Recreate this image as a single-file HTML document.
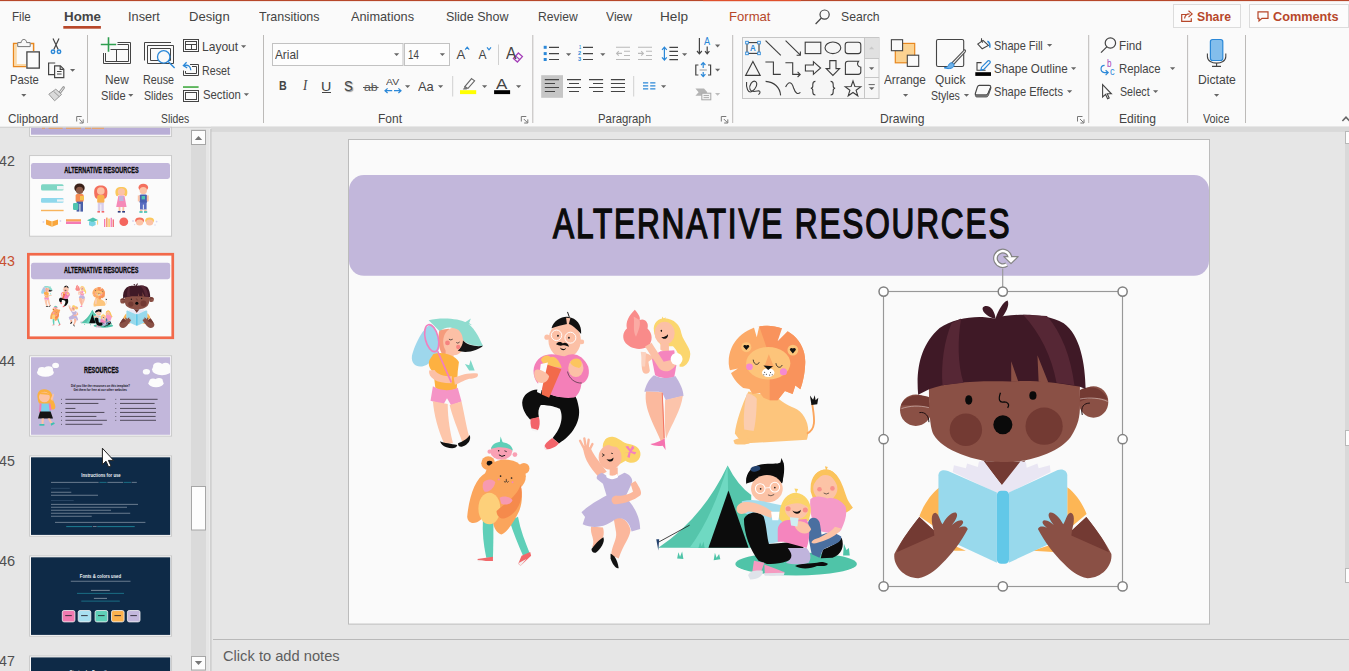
<!DOCTYPE html>
<html lang="en"><head><meta charset="utf-8"><title>PowerPoint</title>
<style>
html,body{margin:0;padding:0}
body{width:1349px;height:671px;overflow:hidden;position:relative;background:#e6e6e6;font-family:"Liberation Sans", sans-serif;}
svg#g{position:absolute;left:0;top:0}
svg text{font-family:"Liberation Sans", sans-serif}
.t{position:absolute;display:block;transform-origin:0 0;white-space:nowrap;line-height:1;font-family:"Liberation Sans", sans-serif}
</style></head><body>
<svg id="g" width="1349" height="671" viewBox="0 0 1349 671">
<!-- BASE: backgrounds and chrome -->
<rect x="0" y="0" width="1349" height="671" fill="#e6e6e6"/>
<rect x="0" y="0" width="1349" height="127" fill="#fafafa"/>
<rect x="0" y="126.7" width="1349" height="1.2" fill="#d2d2d2"/>
<rect x="211" y="126.7" width="1138" height="5.2" fill="#d9d9d9"/>
<!-- top accent line -->
<rect x="0" y="0" width="1349" height="1.1" fill="#b7472a"/>
<rect x="703" y="0" width="98" height="1.1" fill="#e0502c"/>
<!-- home underline -->
<rect x="63.3" y="26" width="37.6" height="2.7" fill="#b7472a"/>
<!-- share / comments buttons -->
<rect x="1173.5" y="4.5" width="67" height="23" fill="#fcfcfc" stroke="#dcdcdc" stroke-width="1"/>
<rect x="1249.5" y="4.5" width="99" height="23" fill="#fcfcfc" stroke="#dcdcdc" stroke-width="1"/>
<!-- group separators -->
<g fill="#bcbab8">
<rect x="87" y="35" width="1" height="88"/>
<rect x="263" y="35" width="1" height="88"/>
<rect x="532.3" y="35" width="1" height="88"/>
<rect x="732.2" y="35" width="1" height="88"/>
<rect x="1088.2" y="35" width="1" height="88"/>
<rect x="1187.1" y="35" width="1" height="88"/>
<rect x="1245" y="35" width="1" height="88"/>
</g>
<g fill="#d0d0d0">
<rect x="498" y="44.5" width="1" height="20.5"/>
<rect x="452.2" y="76" width="1" height="20.5"/>
<rect x="633.2" y="76" width="1" height="20.5"/>
</g>
<!-- font boxes -->
<rect x="272.5" y="43.5" width="130.5" height="22" fill="#fdfdfd" stroke="#c2c2c2"/>
<rect x="404.5" y="43.5" width="45" height="22" fill="#fdfdfd" stroke="#c2c2c2"/>
<!-- align-left selected bg -->
<rect x="541.2" y="75.2" width="21.8" height="22.6" fill="#c6c6c6"/>
<!-- shapes gallery -->
<rect x="742.5" y="37.5" width="136.5" height="61" fill="#f6f6f6" stroke="#c6c6c6"/>
<rect x="864.5" y="38" width="14" height="20.5" fill="#e1e1e1"/>
<path d="M864.5 37.5V98.5M864.5 58.5H879M864.5 77.5H879" stroke="#c6c6c6" fill="none"/>
<!-- notes pane separator -->
<rect x="213" y="639" width="1136" height="1" fill="#b9b9b9"/>
<!-- left panel scrollbar -->
<rect x="191" y="129" width="15" height="542" fill="#dadada"/>
<rect x="191.5" y="130.5" width="14" height="14" fill="#fdfdfd" stroke="#a6a6a6"/>
<path d="M194.8 140l3.7-4 3.7 4z" fill="#777"/>
<rect x="191.5" y="486.5" width="14" height="43.5" fill="#fdfdfd" stroke="#a6a6a6"/>
<rect x="191.5" y="656.5" width="14" height="13.5" fill="#fdfdfd" stroke="#a6a6a6"/>
<path d="M194.8 661l3.7 4 3.7-4z" fill="#777"/>
<rect x="209.4" y="129" width="1" height="542" fill="#f0f0f0"/><rect x="210.4" y="129" width="1" height="542" fill="#bebebe"/>
<!-- right scrollbar fragments -->
<rect x="1345" y="132" width="4" height="437" fill="#d9d9d9"/>
<rect x="1345.5" y="131.5" width="8" height="12" fill="#fdfdfd" stroke="#b8b8b8"/>
<rect x="1345.5" y="430.5" width="8" height="15" fill="#fdfdfd" stroke="#b8b8b8"/>
<rect x="1345.5" y="568.5" width="8" height="14" fill="#fdfdfd" stroke="#b8b8b8"/>

<!-- RIBBON ICONS -->
<g id="arrows">
<path d="M21.2 94h5.2l-2.6 2.8z" fill="#666666"/>
<path d="M70 68.9h5.2l-2.6 2.8z" fill="#666666"/>
<path d="M128.2 94h5.2l-2.6 2.8z" fill="#666666"/>
<path d="M241 45.2h5.2l-2.6 2.8z" fill="#666666"/>
<path d="M243.8 93.2h5.2l-2.6 2.8z" fill="#666666"/>
<path d="M394 53.2h5.2l-2.6 2.8z" fill="#666666"/>
<path d="M439.8 53.2h5.2l-2.6 2.8z" fill="#666666"/>
<path d="M405 85.3h5.2l-2.6 2.8z" fill="#666666"/>
<path d="M438 85.3h5.2l-2.6 2.8z" fill="#666666"/>
<path d="M482 85.3h5.2l-2.6 2.8z" fill="#666666"/>
<path d="M516 85.3h5.2l-2.6 2.8z" fill="#666666"/>
<path d="M566 53.2h5.2l-2.6 2.8z" fill="#666666"/>
<path d="M600.2 53.2h5.2l-2.6 2.8z" fill="#666666"/>
<path d="M682 53.2h5.2l-2.6 2.8z" fill="#666666"/>
<path d="M715 44.6h5.2l-2.6 2.8z" fill="#666666"/>
<path d="M715 68.8h5.2l-2.6 2.8z" fill="#666666"/>
<path d="M661 85.3h5.2l-2.6 2.8z" fill="#666666"/>
<path d="M903 94h5.2l-2.6 2.8z" fill="#666666"/>
<path d="M963.9 94h5.2l-2.6 2.8z" fill="#666666"/>
<path d="M1047 44h5.2l-2.6 2.8z" fill="#666666"/>
<path d="M1071 67.2h5.2l-2.6 2.8z" fill="#666666"/>
<path d="M1067 90.2h5.2l-2.6 2.8z" fill="#666666"/>
<path d="M1170 67.2h5.2l-2.6 2.8z" fill="#666666"/>
<path d="M1153 90.2h5.2l-2.6 2.8z" fill="#666666"/>
<path d="M1214 94h5.2l-2.6 2.8z" fill="#666666"/>
<path d="M715 93h5.2l-2.6 2.8z" fill="#bdbdbd"/>
</g>
<path d="M76.7 121.5V116.5H81.7" fill="none" stroke="#777" stroke-width="1"/><path d="M79.2 119l3.6 3.6M83.2 119.4V123H79.60000000000001" fill="none" stroke="#777" stroke-width="1"/>
<path d="M521.3 121.5V116.5H526.3" fill="none" stroke="#777" stroke-width="1"/><path d="M523.8 119l3.6 3.6M527.8 119.4V123H524.1999999999999" fill="none" stroke="#777" stroke-width="1"/>
<path d="M721.3 121.5V116.5H726.3" fill="none" stroke="#777" stroke-width="1"/><path d="M723.8 119l3.6 3.6M727.8 119.4V123H724.1999999999999" fill="none" stroke="#777" stroke-width="1"/>
<path d="M1077.5 121.5V116.5H1082.5" fill="none" stroke="#777" stroke-width="1"/><path d="M1080 119l3.6 3.6M1084 119.4V123H1080.4" fill="none" stroke="#777" stroke-width="1"/>
<g fill="none" stroke="#444444" stroke-width="1.2"><circle cx="824.6" cy="14.6" r="4.6"/><path d="M821.4 18l-5.8 6"/></g>
<g fill="none" stroke="#b7472a" stroke-width="1.2"><path d="M1186.5 14.5H1181.7V21.3H1191.3V18.2"/><path d="M1184.6 18.5c0.3-3 2.2-4.6 5-4.6M1188.5 10.8l3.6 3.1-3.6 3.2"/></g>
<path d="M1258 11.8H1268V18.4H1262l-3 2.6v-2.6H1258z" fill="none" stroke="#b7472a" stroke-width="1.2"/>
<path d="M1342.4 121l3.6-3.8 3.6 3.8" fill="none" stroke="#666" stroke-width="1.6"/>
<g><path d="M17.2 43.6H13.6V66.6H26" fill="none" stroke="#e8871e" stroke-width="1.5"/><path d="M14.4 44.4h2.4V65.8h-2.4z" fill="#fbd9a5"/><path d="M14.4 64h11.6v1.8H14.4z" fill="#fbd9a5"/><path d="M30.6 43.6H33.6V51" fill="none" stroke="#e8871e" stroke-width="1.5"/>
<path d="M17.7 46.6V42.6H21.2c0-4.2 5.4-4.2 5.4 0H30.2V46.6z" fill="#f9f9f9" stroke="#777" stroke-width="1"/>
<rect x="26.9" y="51.9" width="12.4" height="16.2" fill="#fcfcfc" stroke="#444444" stroke-width="1.3"/></g>
<g fill="none" stroke="#444444" stroke-width="1.2"><path d="M53 38.5L58.2 49.6M59 38.5L53.8 49.6"/></g><g fill="none" stroke="#2b88d8" stroke-width="1.5"><circle cx="53" cy="51.8" r="1.7"/><circle cx="59" cy="51.8" r="1.7"/></g>
<g fill="none" stroke="#444444" stroke-width="1.2"><path d="M54 74.6H48.6V63H55.2"/><path d="M54.6 65.8H60.4L63.8 69.2V77.6H54.6z" fill="#f9f9f9"/><path d="M60.2 66V69.4H63.6"/><path d="M57 71.5h4.6M57 74h4.6" stroke-width="1"/></g>
<path d="M63.6 87.6l-4 5.2" stroke="#9a9a9a" stroke-width="2.8" stroke-linecap="round"/><path d="M63.5 87.8l-3.6 4.6" stroke="#ececec" stroke-width="1" stroke-linecap="round"/><path d="M55.8 89.2L61.6 94.4L54.6 100.8L48.8 94.200000000000001z" fill="#dadada" stroke="#9a9a9a" stroke-width="1" stroke-linejoin="round"/><path d="M53.6 91.4L59.2 96.6" stroke="#9a9a9a" stroke-width="1"/>
<g fill="none" stroke="#444444" stroke-width="1"><path d="M117.5 42.5H130.5V63.5H103.5V53"/><path d="M117.5 44.5H128.5V61.5H105.5V53"/><path d="M110.5 49.5H128.5M116.5 49.5V61.5"/></g><path d="M100.8 44.5H116.2M108.5 37.2V51.8" stroke="#2e9e4f" stroke-width="1.6" fill="none"/>
<g fill="none" stroke="#444444" stroke-width="1"><path d="M171 42.5H144.5V60.5"/><path d="M147.5 45.5H173.5V63.5H147.5z"/><path d="M150.5 48.5H170.5V60.5H150.5z"/></g><circle cx="163.7" cy="56.9" r="6.2" fill="#f9f9f9" stroke="#2b88d8" stroke-width="1.3"/><path d="M168.2 61.6l6.4 6.4" stroke="#2b88d8" stroke-width="1.4"/>
<g fill="none" stroke="#444444" stroke-width="1"><rect x="183.5" y="39.5" width="15" height="12"/><rect x="185.5" y="41.5" width="11" height="8"/><path d="M185.5 44.5H196.5M191.5 44.5V49.5"/></g>
<g fill="none" stroke="#444444" stroke-width="1"><path d="M190 64.5H198.5V75.5H183.5V70.5"/><path d="M192 66.5H196.5V73.5H185.5V71"/></g><path d="M184.2 65.6c4-1.2 6.4 0.6 6.6 4.6M186.6 62.2l-3.2 3.4 3.8 2.4" fill="none" stroke="#2b88d8" stroke-width="1.3"/>
<rect x="183" y="86.2" width="15.6" height="1.7" fill="#4cae4c"/><g fill="none" stroke="#444444" stroke-width="1"><rect x="183.5" y="90.5" width="15" height="11"/><rect x="185.5" y="92.5" width="11" height="7"/></g>
<path d="M465.2 49.6l2-2.4 2 2.4" fill="none" stroke="#2b88d8" stroke-width="1.2"/><path d="M487 47.4l2 2.4 2-2.4" fill="none" stroke="#2b88d8" stroke-width="1.2"/>
<path d="M518.4 53l4 3.6-5 5.4-4-3.6z" fill="#f9f9f9" stroke="#a43fb8" stroke-width="1.3"/><path d="M515.6 55.9l4 3.6" stroke="#a43fb8" stroke-width="1.1"/>
<path d="M363 87.5H378.6" stroke="#555" stroke-width="1"/>
<path d="M385 90.7H392.2M387.6 88.4l-2.6 2.3 2.6 2.3M394 90.7H401M398.4 88.4l2.6 2.3-2.6 2.3" fill="none" stroke="#2b88d8" stroke-width="1.2"/>
<path d="M322 92.5H331" stroke="#444444" stroke-width="1"/>
<rect x="460" y="90.2" width="16.2" height="3.9" fill="#ffff00"/><path d="M471.6 78.6l3 2.2-6.6 7.6-3.2-1.8z" fill="none" stroke="#666" stroke-width="1.1"/><path d="M464.8 86.6l3.2 1.8-1.6 1.2h-3.6z" fill="#777"/>
<rect x="494.1" y="90.2" width="16" height="3.9" fill="#000"/>
<g fill="#2b88d8"><rect x="543.7" y="45.8" width="3" height="3"/><rect x="543.7" y="52.1" width="3" height="3"/><rect x="543.7" y="58" width="3" height="3"/></g><path d="M549 47.3H559M549 53.6H559M549 59.5H559" stroke="#444444" stroke-width="1.2"/>
<path d="M583 47.3H593M583 53.6H593M583 59.5H593" stroke="#444444" stroke-width="1.2"/>
<g stroke="#b9b9b9" stroke-width="1.1" fill="none"><path d="M616 47.3H630M624 51.3H630M624 55.5H630M616 59.5H630M616.6 53.4H622M618.8 51.2l-2.2 2.2 2.2 2.2"/><path d="M638 47.3H652M646 51.3H652M646 55.5H652M638 59.5H652M638 53.4H643.4M641.2 51.2l2.2 2.2-2.2 2.2"/></g>
<path d="M669.4 47.3H678M669.4 51.4H678M669.4 55.5H678M669.4 59.6H678" stroke="#444444" stroke-width="1.2"/><path d="M664.4 47.4V59.8M662 49.8l2.4-2.6 2.4 2.6M662 57.4l2.4 2.6 2.4-2.6" fill="none" stroke="#2b88d8" stroke-width="1.2"/>
<path d="M699.4 38V53.6M697 51l2.4 2.8 2.4-2.8M707.2 46.4V53.6M705 51.2l2.2 2.6 2.2-2.6" fill="none" stroke="#444444" stroke-width="1.2"/>
<path d="M698.4 65H695.8V75H698.4M708 65H710.6V75H708" fill="none" stroke="#444444" stroke-width="1.2"/><path d="M699.6 70H706.8" stroke="#999" stroke-width="1"/><path d="M703.2 62.8V68M701 65l2.2-2.4 2.2 2.4M703.2 72V76.6M701 74.2l2.2 2.4 2.2-2.4" fill="none" stroke="#2b88d8" stroke-width="1.2"/>
<path d="M695.4 88.6H704l3.4 3.6-3.4 3.6H695.4l3.2-3.6z" fill="#b4b4b4"/><rect x="701.8" y="93.2" width="9" height="6.6" fill="#f3f3f3" stroke="#a8a8a8"/><path d="M703.6 95.5H709M703.6 97.6H709" stroke="#a8a8a8" stroke-width=".9"/>
<path d="M544.8 79.6H559M544.8 83.5H555M544.8 87.5H559M544.8 91.5H555" stroke="#444444" stroke-width="1.2"/>
<path d="M567 79.6H581M569 83.5H579M567 87.5H581M569 91.5H579" stroke="#444444" stroke-width="1.2"/>
<path d="M589 79.6H603.1M593 83.5H603.1M589 87.5H603.1M593 91.5H603.1" stroke="#444444" stroke-width="1.2"/>
<path d="M610.9 79.6H625M610.9 83.5H625M610.9 87.5H625M610.9 91.5H625" stroke="#444444" stroke-width="1.2"/>
<path d="M643 82.8h5.2M650.2 82.8h5.2M643 85.8h5.2M650.2 85.8h5.2M643 88.8h5.2M650.2 88.8h5.2" stroke="#2b88d8" stroke-width="1.2"/>
<g fill="none" stroke="#3d3d3d" stroke-width="1.1">
<rect x="747" y="42.6" width="12" height="10.8"/>
<path d="M765.6 40.6L780.8 55.4"/>
<path d="M785.6 40.6L800.4 55.2M796.6 55.2H800.4V51.4"/>
<rect x="805.2" y="42.2" width="15.6" height="11.4"/>
<ellipse cx="832.9" cy="47.8" rx="7.9" ry="5.8"/>
<rect x="845.2" y="42.2" width="15.6" height="11.4" rx="2.6"/>
<path d="M752.9 61.4L745.6 75.4H760.2z"/>
<path d="M765.4 62H773.4V74.4H780.8"/>
<path d="M785.4 62.8H792.7V74.4H800.2M797.6 71.8l2.6 2.6-2.6 2.6"/>
<path d="M805.4 65H813.4V61.6L820.6 68L813.4 74.4V71H805.4z"/>
<path d="M829.8 60.6H836V68.6H839.6L832.9 75.4L826.2 68.6H829.8z"/>
<path d="M848 61.2H858.6C856.6 63.8 857.4 66.4 860.8 67.2V71.8C860.8 73.4 859.6 74.4 858.2 74.4H845.4V63.8C845.4 62.2 846.4 61.2 848 61.2z"/>
<path d="M746.6 82c-0.8 6 1.6 11.4 5.2 9.600000000000001c4-2.2 6.600000000000001-8.2 3.6-10.2c-3-1.6-6.8 4.2-5.4 8c1.4 3.6 6.2 1.8 8.8 1.4c1.6 0.4 1.8 2 -0.4 3.8"/>
<path d="M765.6 81.4C774 82 780 87 780.6 95.4"/>
<path d="M785.6 87C788.6 81 791.6 81.4 793.6 88C795.6 94 798 94.4 800.4 92.4"/>
<path d="M815.4 81.4c-2.400000000000001 0-2.6 1-2.6 3v1.6c0 1.4-0.6 2.2-2 2.2c1.4 0 2 0.8 2 2.2v1.6c0 2 0.2 3 2.6 3"/>
<path d="M830.6 81.4c2.4 0 2.6 1 2.6 3v1.6c0 1.4 0.6 2.2 2 2.2c-1.4 0-2 0.8-2 2.2v1.6c0 2-0.2 3-2.6 3"/>
<path d="M853.0 81.0L854.9 86.5L860.8 86.7L856.1 90.2L857.8 95.8L853.0 92.5L848.2 95.8L849.9 90.2L845.2 86.7L851.1 86.5z"/>
</g>
<rect x="745.7" y="41.300000000000004" width="2.6" height="2.6" fill="#fff" stroke="#2b88d8" stroke-width="0.9"/>
<rect x="757.7" y="41.300000000000004" width="2.6" height="2.6" fill="#fff" stroke="#2b88d8" stroke-width="0.9"/>
<rect x="745.7" y="52.1" width="2.6" height="2.6" fill="#fff" stroke="#2b88d8" stroke-width="0.9"/>
<rect x="757.7" y="52.1" width="2.6" height="2.6" fill="#fff" stroke="#2b88d8" stroke-width="0.9"/>
<path d="M869 49.2l2.6-2.8 2.6 2.8z" fill="#c8c8c8"/><path d="M869 67.2h5.2l-2.6 2.8z" fill="#666"/><path d="M868.6 84.6H874.8" stroke="#666" stroke-width="1"/><path d="M869 87.2h5.4l-2.7 2.9z" fill="#666"/>
<rect x="895.3" y="43.4" width="19.4" height="19.4" fill="#fcd391" stroke="#e8871e" stroke-width="1.2"/><rect x="891.4" y="39.7" width="11.2" height="11" fill="#fafafa" stroke="#444444" stroke-width="1.1"/><rect x="907.3" y="55.2" width="11.4" height="11.2" fill="#fafafa" stroke="#444444" stroke-width="1.1"/>
<rect x="936.5" y="39.5" width="27.2" height="27" rx="1.6" fill="none" stroke="#444444" stroke-width="1.1"/><path d="M964.6 49.6c1 .6 1.2 1.4.6 2.2L953.6 64.4l-1.8-1.4z" fill="#f9f9f9" stroke="#555" stroke-width="1.1"/><path d="M944.2 67.8c3.4-.2 4.2-2.2 5-3.800000000000001c1.4-2 4.6-1.2 4.8 1.2c.2 2.6-4.400000000000001 4.600000000000001-9.8 2.6z" fill="#6fb0e6" stroke="#2b88d8" stroke-width="1"/>
<path d="M981.6 38.2c-.6 1.4-.2 3 1.2 4.400000000000001" fill="none" stroke="#444444" stroke-width="1.1"/><path d="M983 40.4L988.4 45.4L982.2 48.8L977.8 44z" fill="none" stroke="#444444" stroke-width="1.1"/><path d="M987.4 41.2c2.2 1 2.8 3.4 2.4 6.4" fill="none" stroke="#2b88d8" stroke-width="1.6"/>
<path d="M985.6 70.2H977V62.6H981.6" fill="none" stroke="#444444" stroke-width="1.1"/><rect x="975.3" y="72.2" width="15.7" height="3.7" fill="#000"/><path d="M988 60.8c1.2-.6 2.6.6 2.2 1.8L983.8 69.4l-3 .8.8-3z" fill="#f9f9f9" stroke="#2b88d8" stroke-width="1.2"/>
<path d="M979.4 85.4H989c1.4 0 2 .8 1.600000000000001 2L988 93.4c-.4 1-1.2 1.600000000000001-2.4 1.600000000000001H976.6c-1.2 0-1.6-.8-1.2-1.8L977.4 87c.4-1 1-1.6 2-1.6z" fill="#f9f9f9" stroke="#444444" stroke-width="1.1"/><path d="M975.4 93.6V95.4c0 1 .6 1.6 1.6 1.6H986c1.2 0 2-.6 2.400000000000001-1.600000000000001L990.8 88.6V87L988 93.6c-.4 1-1.2 1.400000000000001-2.4 1.400000000000001H976.800000000000001c-1 0-1.400000000000001-.6-1.400000000000001-1.400000000000001z" fill="#8a8a8a" stroke="#444444" stroke-width=".8"/>
<g fill="none" stroke="#444444" stroke-width="1.2"><circle cx="1110.4" cy="43" r="5.2"/><path d="M1106.8 46.8l-5.8 5.8"/></g>
<path d="M1104.6 65.4c-4.6 0-4.8 6.6-.2 7.2h3.4M1105.6 70.2l2.6 2.4-2.6 2.6" fill="none" stroke="#2b88d8" stroke-width="1.2"/>
<path d="M1102.6 84.6V97L1105.6 94.4L1107.6 98.8L1109.2 98L1107.2 93.8H1111.4z" fill="#f9f9f9" stroke="#444444" stroke-width="1.1" stroke-linejoin="miter"/>
<rect x="1210.4" y="39.5" width="12.4" height="21" rx="2.2" fill="#83beec" stroke="#2b88d8" stroke-width="1.2"/><path d="M1207.4 53.4V56.4c0 9 18.4 9 18.4 0V53.4M1216.6 63.2V66.2M1212 66.4H1221" fill="none" stroke="#444444" stroke-width="1.1"/>

<!-- THUMBNAILS -->
<rect x="29.6" y="127.2" width="142" height="9.2" fill="#f8f8f8" stroke="#c6c6c6" stroke-width=".9"/>
<rect x="31" y="127.9" width="139.2" height="6.8" fill="#b9aed6"/>
<path d="M42 128.3h3M48.6 128.3h14M66 128.3h15M85 128.3h6M92 128.3h12" stroke="#f5a14a" stroke-width=".9"/>
<rect x="29.6" y="155.6" width="142" height="80.6" fill="#fbfbfb" stroke="#c6c6c6" stroke-width=".9"/>
<rect x="31" y="162.9" width="139" height="16" rx="2.4" fill="#c2b7db"/>
<g>
<rect x="41" y="184.2" width="22.6" height="6.4" rx="1.5" fill="#7fd6c4"/><rect x="57" y="186" width="7" height="3.4" fill="#eef4f6"/>
<rect x="41" y="198" width="22.6" height="4.8" rx="1.2" fill="#8fd8ec"/><rect x="57" y="199.4" width="7" height="2.2" fill="#eef4f6"/>
<rect x="41" y="209.8" width="22.6" height="1.4" fill="#f8b45c"/>
<ellipse cx="79.5" cy="188" rx="5.2" ry="4.6" fill="#3a2018"/><ellipse cx="79.6" cy="190.4" rx="3.6" ry="3.6" fill="#8a5a48"/><rect x="75.6" y="194" width="8" height="8" rx="1.5" fill="#f58a50"/><rect x="76.6" y="201.6" width="6.4" height="10" fill="#4a5fa8"/><rect x="79.4" y="204" width="1" height="8" fill="#fafafa"/><rect x="73" y="203" width="5.4" height="7" rx="1.2" fill="#4fc4b0"/><rect x="80" y="196" width="4" height="4" fill="#f5c24e"/>
<path d="M94.6 196C93 188 96 185.6 100.8 185.6C105.6 185.6 108.6 188 107 196C106 199 104 200 103.6 197L98 197C97.6 200 95.600000000000001 199 94.6 196z" fill="#f4705e"/><ellipse cx="100.8" cy="191" rx="3.8" ry="3.8" fill="#fcc3a6"/><rect x="97.2" y="195" width="7.2" height="8" rx="1.5" fill="#f9b24e"/><rect x="97.8" y="202.6" width="6" height="8.4" fill="#d8cdea"/><rect x="100.4" y="204.4" width="0.9" height="6.6" fill="#fafafa"/><rect x="97.4" y="211" width="2.6" height="1.6" fill="#f2686a"/><rect x="101.6" y="211" width="2.6" height="1.6" fill="#f2686a"/>
<path d="M115.6 194C114.6 188.6 117.4 187 121.4 187C125.4 187 128.2 188.6 127.2 194C126.6 196.6 125 197 124.6 195L118.2 195C117.8 197 116.2 196.6 115.6 194z" fill="#fbc85c"/><ellipse cx="121.4" cy="191.8" rx="3.6" ry="3.6" fill="#fcc3a6"/><path d="M118.4 195.6H124.4L126.6 207H116.2z" fill="#f58ab8"/><rect x="119" y="196" width="4.6" height="5" fill="#c0b4dc"/><rect x="118.6" y="207" width="1.8" height="4.4" fill="#fcc3a6"/><rect x="122.4" y="207" width="1.8" height="4.4" fill="#fcc3a6"/><rect x="117.8" y="211" width="2.8" height="1.6" fill="#2c3c80"/><rect x="122.2" y="211" width="2.8" height="1.6" fill="#2c3c80"/>
<ellipse cx="143.3" cy="187.4" rx="4.8" ry="3.6" fill="#f4705e"/><ellipse cx="143.3" cy="190.6" rx="3.7" ry="3.7" fill="#fcc3a6"/><rect x="139.4" y="194.4" width="7.8" height="8.6" rx="1.5" fill="#4a5fb0"/><rect x="137.8" y="195.4" width="2" height="6" fill="#fcc3a6"/><rect x="146.8" y="195.4" width="2" height="6" fill="#fcc3a6"/><rect x="140" y="202.6" width="6.6" height="7" fill="#5a6cc0"/><rect x="142.9" y="204.6" width="0.9" height="5" fill="#fafafa"/><rect x="140" y="209.6" width="2.4" height="2" fill="#fcc3a6"/><rect x="144.2" y="209.6" width="2.4" height="2" fill="#fcc3a6"/><rect x="139.4" y="211.2" width="3.2" height="1.6" fill="#3fc0b0"/><rect x="144" y="211.2" width="3.2" height="1.6" fill="#3fc0b0"/><rect x="141.6" y="196" width="3.4" height="3.4" fill="#4fc4b0"/>
<path d="M46 219.4L52 221.4L58 219.4V224.6L52 226.8L46 224.6z" fill="#f9a63c"/><path d="M51.6 221.4h.8v5.4h-.8z" fill="#fbe0b0"/>
<rect x="66" y="219.2" width="15" height="2.4" fill="#f9a25a"/><rect x="66" y="221.6" width="15" height="2.4" fill="#f47ab4"/>
<path d="M87 220.2L93 217.6L98 220L92.4 222.6z" fill="#4fc4b0"/><path d="M89 221.6V225.2L92.400000000000001 226.4L95.6 225V222z" fill="#7ad4e4"/><path d="M97.6 220.4V224.6" stroke="#f5c24e" stroke-width=".7"/>
<rect x="104" y="219" width="1.3" height="8" fill="#f47ab4"/><rect x="106.2" y="217.6" width="1.3" height="9.4" fill="#f58a50"/><rect x="108.4" y="218.6" width="1.3" height="8.4" fill="#f5c24e"/><rect x="110.6" y="217.8" width="1.3" height="9.2" fill="#f47ab4"/><rect x="112.6" y="219.4" width="1.3" height="7.6" fill="#f2686a"/>
<ellipse cx="123.8" cy="221.8" rx="4.4" ry="4.3" fill="#f4665e"/>
<ellipse cx="139.6" cy="220.6" rx="4.4" ry="3" fill="#f4705e"/><ellipse cx="139.6" cy="222.6" rx="3.6" ry="3" fill="#fcc3a6"/><ellipse cx="149.6" cy="220.6" rx="4.4" ry="3" fill="#fbc85c"/><ellipse cx="149.6" cy="222.6" rx="3.6" ry="3" fill="#fcc3a6"/>
<g fill="#d9d4ee"><circle cx="43.4" cy="222" r=".9"/><circle cx="60.4" cy="221" r=".9"/><circle cx="133" cy="221" r=".9"/><circle cx="156.6" cy="221.6" r=".9"/><circle cx="134.6" cy="224.6" r=".7"/><circle cx="155" cy="225" r=".7"/></g>
</g>
<rect x="28.35" y="254.25" width="144.4" height="83.5" fill="#fafafa" stroke="#f2694a" stroke-width="2.7"/>
<use href="#s43" transform="translate(-25.489,234.501) scale(0.16186)"/>
<rect x="29.6" y="355.8" width="142" height="80.3" fill="#fbfbfb" stroke="#c6c6c6" stroke-width=".9"/>
<rect x="31" y="357.2" width="139.2" height="77.6" fill="#c2b7db"/>
<clipPath id="c44"><rect x="31" y="357.2" width="139.2" height="77.6"/></clipPath><g fill="#fcfcfc" clip-path="url(#c44)"><ellipse cx="45.4" cy="372.4" rx="8.4" ry="4.4"/><ellipse cx="42" cy="370" rx="4" ry="3"/><ellipse cx="48.6" cy="369.4" rx="4.4" ry="3.2"/><ellipse cx="55.6" cy="365.4" rx="3.4" ry="2.6"/>
<ellipse cx="162" cy="369.6" rx="10" ry="5.6"/><ellipse cx="158" cy="366" rx="5" ry="3.6"/><ellipse cx="165.6" cy="366.4" rx="4.6" ry="3.6"/><ellipse cx="146.4" cy="371.8" rx="3.6" ry="2.8"/><ellipse cx="156" cy="383.2" rx="7.6" ry="4"/><ellipse cx="153" cy="381" rx="3.6" ry="2.6"/><ellipse cx="159" cy="380.8" rx="3.8" ry="2.8"/></g>
<rect x="164" y="357.2" width="6.2" height="20" fill="#fcfcfc" opacity="0"/>
<path d="M37.6 398C36.6 392 40 389 44.4 389.2C49.6 389.4 52.6 393 52.4 398C53.4 402 56 404.6 55.2 408C54 410.4 51 410 50 407L40 404C38 402.6 37.8 400 37.6 398z" fill="#fbb040"/><ellipse cx="44.4" cy="397" rx="5.4" ry="5.2" fill="#fcc3a6"/><path d="M39 394C42 391.6 48 392 50.6 395.6C47 394.4 42.6 394.2 39 394z" fill="#fbb040"/>
<path d="M40 403.4H49.6L51 412H39z" fill="#7fd0ea"/><path d="M39.6 403.4L41.6 403.4L41 412L39 412zM48.6 403.4L50.4 403.4L51.6 410L49.6 411z" fill="#f47ab4"/><path d="M50.6 399L53 393.6L54 394.4L52.4 401z" fill="#fcc3a6"/>
<path d="M40 411.4H50.6L53 418.6H38z" fill="#151515"/><path d="M41.6 418.6h2.4l-.6 5.6h-1.8zM47.6 418.6h2.4l2.6 4.6-1.8.8z" fill="#fcc3a6"/><rect x="39.4" y="424" width="5" height="1.7" fill="#3fc0b0"/><path d="M50.6 423.6l3.4-1.400000000000001.8 1.6-3.600000000000001 2z" fill="#3fc0b0"/>
<rect x="61.2" y="398.9" width=".8" height=".7" fill="#222"/>
<rect x="65.4" y="398.84999999999997" width="40" height=".75" fill="#2a2630"/>
<rect x="61.2" y="403.0" width=".8" height=".7" fill="#222"/>
<rect x="65.4" y="402.95" width="33" height=".75" fill="#2a2630"/>
<rect x="65.4" y="407.95" width="10" height=".75" fill="#2a2630"/>
<rect x="61.2" y="412.0" width=".8" height=".7" fill="#222"/>
<rect x="65.4" y="411.95" width="39" height=".75" fill="#2a2630"/>
<rect x="61.2" y="416.0" width=".8" height=".7" fill="#222"/>
<rect x="65.4" y="415.95" width="31" height=".75" fill="#2a2630"/>
<rect x="61.2" y="419.9" width=".8" height=".7" fill="#222"/>
<rect x="65.4" y="419.84999999999997" width="41.5" height=".75" fill="#2a2630"/>
<rect x="61.2" y="423.9" width=".8" height=".7" fill="#222"/>
<rect x="65.4" y="423.84999999999997" width="37" height=".75" fill="#2a2630"/>
<rect x="115.4" y="398.9" width=".8" height=".7" fill="#222"/>
<rect x="120" y="398.84999999999997" width="37.6" height=".75" fill="#2a2630"/>
<rect x="115.4" y="403.0" width=".8" height=".7" fill="#222"/>
<rect x="120" y="402.95" width="34.6" height=".75" fill="#2a2630"/>
<rect x="115.4" y="408.0" width=".8" height=".7" fill="#222"/>
<rect x="120" y="407.95" width="36" height=".75" fill="#2a2630"/>
<rect x="115.4" y="412.0" width=".8" height=".7" fill="#222"/>
<rect x="120" y="411.95" width="36" height=".75" fill="#2a2630"/>
<rect x="115.4" y="416.0" width=".8" height=".7" fill="#222"/>
<rect x="120" y="415.95" width="35.6" height=".75" fill="#2a2630"/>
<rect x="115.4" y="419.9" width=".8" height=".7" fill="#222"/>
<rect x="120" y="419.84999999999997" width="36" height=".75" fill="#2a2630"/>
<rect x="29.6" y="455.9" width="142" height="80.3" fill="#fbfbfb" stroke="#c6c6c6" stroke-width=".9"/>
<rect x="31" y="457.3" width="139.2" height="77.6" fill="#0e2a47"/>
<rect x="51" y="481.90" width="47.6" height="0.8" fill="#c9d2dc" opacity=".6"/>
<rect x="99.4" y="481.90" width="7.2" height="0.8" fill="#27b6c6" opacity=".6"/>
<rect x="107.4" y="481.90" width="15.6" height="0.8" fill="#c9d2dc" opacity=".6"/>
<rect x="123.6" y="481.90" width="7.4" height="0.8" fill="#27b6c6" opacity=".6"/>
<rect x="131.6" y="481.90" width="5.2" height="0.8" fill="#c9d2dc" opacity=".6"/>
<rect x="51" y="487.90" width="18.7" height="0.6" fill="#5c7896" opacity=".6"/>
<rect x="51" y="491.80" width="20.3" height="0.8" fill="#c9d2dc" opacity=".6"/>
<rect x="51" y="494.80" width="47.0" height="0.8" fill="#c9d2dc" opacity=".6"/>
<rect x="51" y="500.20" width="22.7" height="0.6" fill="#5c7896" opacity=".6"/>
<rect x="51" y="503.90" width="87.0" height="0.8" fill="#c9d2dc" opacity=".6"/>
<rect x="51" y="506.80" width="76.0" height="0.8" fill="#c9d2dc" opacity=".6"/>
<rect x="51" y="509.80" width="60.0" height="0.8" fill="#c9d2dc" opacity=".6"/>
<rect x="51" y="512.80" width="79.2" height="0.8" fill="#c9d2dc" opacity=".6"/>
<rect x="51" y="515.80" width="40.7" height="0.8" fill="#c9d2dc" opacity=".6"/>
<rect x="55" y="521.90" width="90.4" height="0.8" fill="#c9d2dc" opacity=".6"/>
<rect x="66.2" y="526.10" width="25.8" height="1" fill="#27b6c6" opacity=".6"/>
<rect x="92.8" y="526.20" width="3.8" height="0.8" fill="#c9d2dc" opacity=".6"/>
<rect x="97.2" y="526.10" width="37.5" height="1" fill="#27b6c6" opacity=".6"/>
<rect x="29.6" y="555.9" width="142" height="80.3" fill="#fbfbfb" stroke="#c6c6c6" stroke-width=".9"/>
<rect x="31" y="557.3" width="139.2" height="77.6" fill="#0e2a47"/>
<rect x="70.8" y="580.80" width="59.7" height="0.8" fill="#c9d2dc" opacity=".6"/>
<rect x="91" y="589.90" width="18.8" height="0.8" fill="#e8edf2" opacity=".6"/>
<rect x="77" y="592.90" width="47.0" height="0.8" fill="#27b6c6" opacity=".6"/>
<rect x="93.9" y="597.90" width="13.1" height="0.8" fill="#e8edf2" opacity=".6"/>
<rect x="81.3" y="600.70" width="38.5" height="0.8" fill="#27b6c6" opacity=".6"/>
<rect x="62.3" y="610.5" width="12.6" height="11.4" rx="1.8" fill="#f07ab0" stroke="#f4f4f4" stroke-width=".8"/>
<rect x="65.2" y="615.2" width="6.6" height=".9" fill="#2a2630"/>
<rect x="78.2" y="610.5" width="12.6" height="11.4" rx="1.8" fill="#a8dff0" stroke="#f4f4f4" stroke-width=".8"/>
<rect x="81.10000000000001" y="615.2" width="6.6" height=".9" fill="#2a2630"/>
<rect x="95.1" y="610.5" width="12.6" height="11.4" rx="1.8" fill="#5fd0b8" stroke="#f4f4f4" stroke-width=".8"/>
<rect x="98.0" y="615.2" width="6.6" height=".9" fill="#2a2630"/>
<rect x="111.5" y="610.5" width="12.6" height="11.4" rx="1.8" fill="#fcb24e" stroke="#f4f4f4" stroke-width=".8"/>
<rect x="114.4" y="615.2" width="6.6" height=".9" fill="#2a2630"/>
<rect x="127.39999999999999" y="610.5" width="12.6" height="11.4" rx="1.8" fill="#c3b8dc" stroke="#f4f4f4" stroke-width=".8"/>
<rect x="130.29999999999998" y="615.2" width="6.6" height=".9" fill="#2a2630"/>
<rect x="29.6" y="656" width="142" height="20" fill="#fbfbfb" stroke="#c6c6c6" stroke-width=".9"/>
<rect x="31" y="657.4" width="139.2" height="20" fill="#0e2a47"/>
<path d="M102.4 448.2V464.6L106 461.2L108.6 467L111 466L108.4 460.4H113.6z" fill="#fff" stroke="#222" stroke-width="1" stroke-linejoin="round"/>
<text x="64.2" y="173.3" font-size="9.2" font-weight="700" fill="#0b0b0b" text-anchor="start" textLength="74.4" lengthAdjust="spacingAndGlyphs" stroke="#0b0b0b" stroke-width="0.32">ALTERNATIVE RESOURCES</text>
<text x="64.0" y="273.4" font-size="9.2" font-weight="700" fill="#0b0b0b" text-anchor="start" textLength="74.4" lengthAdjust="spacingAndGlyphs" stroke="#0b0b0b" stroke-width="0.32">ALTERNATIVE RESOURCES</text>
<text x="84" y="373.2" font-size="8.6" font-weight="700" fill="#0b0b0b" text-anchor="start" textLength="34.7" lengthAdjust="spacingAndGlyphs" stroke="#0b0b0b" stroke-width="0.30">RESOURCES</text>
<text x="71" y="387.3" font-size="2.6" font-weight="700" fill="#16121c" text-anchor="start" textLength="59" lengthAdjust="spacingAndGlyphs">Did you like the resources on this template?</text>
<text x="73.4" y="391.4" font-size="2.6" font-weight="700" fill="#16121c" text-anchor="start" textLength="53.6" lengthAdjust="spacingAndGlyphs">Get them for free at our other websites</text>
<text x="81.3" y="476.9" font-size="4.9" font-weight="700" fill="#eef2f6" text-anchor="start" textLength="39.4" lengthAdjust="spacingAndGlyphs">Instructions for use</text>
<text x="79.8" y="578.4" font-size="5.1" font-weight="700" fill="#eef2f6" text-anchor="start" textLength="41.3" lengthAdjust="spacingAndGlyphs">Fonts &amp; colors used</text>
<text x="69.6" y="674.2" font-size="5.1" font-weight="700" fill="#eef2f6" text-anchor="start" textLength="38" lengthAdjust="spacingAndGlyphs">Stories by Freepik</text>

<!-- SLIDE -->
<rect x="348.5" y="139.5" width="861" height="484.6" fill="#fafafa" stroke="#bcbcbc"/>
<g id="s43">
<rect x="349" y="175" width="860" height="100.8" rx="15" fill="#c2b7db"/>
<!-- fig1: girl with net -->
<g transform="translate(400,300) scale(.23857)">
<path d="M130 103C100 110 60 190 50 235C45 278 85 292 120 266C150 245 166 215 163 190C160 150 150 110 130 103z" fill="#9ed7ec"/>
<path d="M165 126C156 170 162 212 185 240L222 240L205 120z" fill="#f59c7c"/>
<ellipse cx="226" cy="174" rx="45" ry="58" fill="#fcc0a6"/>
<path d="M192 200L226 205L224 246L190 242z" fill="#fcc0a6"/>
<path d="M120 85C170 72 245 76 282 96C322 126 335 168 348 192C312 196 282 186 264 168C262 140 250 118 215 116C195 114 180 122 165 130C150 115 135 100 120 85z" fill="#8fdccf"/>
<path d="M268 96L297 78L290 96L302 106z" fill="#8fdccf"/>
<path d="M264 170C282 190 320 197 348 192C330 210 282 226 242 213C256 200 264 186 264 170z" fill="#151515"/>
<circle cx="199" cy="180" r="10" fill="#f6837f"/><circle cx="244" cy="197" r="9" fill="#f6837f"/>
<path d="M205 164q8 7 16 0M236 178q6 7 14-2" stroke="#222" fill="none" stroke-width="3"/>
<path d="M140 226C180 214 230 230 247 260L242 300L238 372C200 388 165 382 148 368L140 300C124 290 116 270 124 250z" fill="#fdb141"/>
<path d="M122 295C118 324 150 349 216 349L218 320C180 320 155 310 145 293z" fill="#fcc0a6"/>
<path d="M225 325C250 320 275 303 325 308C332 320 320 330 290 330C265 337 245 352 230 355z" fill="#fcc0a6"/>
<path d="M290 296L272 268L290 273L296 252L313 296z" fill="#7fd8c8"/>
<path d="M138 362C170 383 215 381 242 368L258 425L215 442L197 412L182 438L128 422z" fill="#f594c6"/>
<path d="M138 424L200 436C200 500 212 560 222 600L186 604C160 545 142 480 138 424z" fill="#fdc6aa"/>
<path d="M208 440L258 425C270 480 276 520 290 573L262 598C242 540 220 490 208 440z" fill="#fdc6aa"/>
<path d="M168 592C185 600 215 602 240 608C237 624 215 624 195 617C180 612 170 603 168 592z" fill="#111"/>
<path d="M243 601C255 596 280 586 292 566C300 586 285 607 262 614C250 617 243 611 243 601z" fill="#111"/>
<ellipse cx="133" cy="160" rx="27" ry="58" transform="rotate(-14 133 160)" fill="none" stroke="#f27fbf" stroke-width="7"/>
<path d="M158 215L215 345" stroke="#f27fbf" stroke-width="7"/>
</g>
<!-- fig2: man with popcorn -->
<g transform="translate(505,300) scale(.23857)">
<path d="M165 380C120 364 75 390 72 430C72 465 95 490 105 501L142 491C138 470 140 455 150 440C190 440 215 450 230 456C250 500 225 550 200 578L226 601C280 570 320 510 309 450C305 425 300 410 292 400C250 415 200 405 165 380z" fill="#0d0d0d"/>
<path d="M108 498L142 490C148 510 146 530 138 546L112 540C106 525 106 510 108 498z" fill="#f2646a"/><path d="M112 538L138 545L134 552L114 548z" fill="#f4f4f4"/>
<path d="M198 578L226 600C215 615 195 625 170 626C160 615 165 600 198 578z" fill="#f2646a"/><path d="M163 610L176 626L166 624z" fill="#f4f4f4"/>
<ellipse cx="250" cy="168" rx="68" ry="76" fill="#fcc0a6"/>
<circle cx="176" cy="156" r="11" fill="#fcc0a6"/><circle cx="322" cy="176" r="10" fill="#fcc0a6"/>
<path d="M195 118C205 85 240 67 265 71C300 75 323 105 319 143C300 120 280 105 265 100C240 105 215 112 195 118z" fill="#111"/>
<path d="M262 50L270 73" stroke="#111" stroke-width="4"/>
<path d="M256 74L274 76L262 122z" fill="#fcc0a6"/>
<circle cx="216" cy="148" r="22" fill="none" stroke="#fff" stroke-width="4"/><circle cx="274" cy="158" r="23" fill="none" stroke="#fff" stroke-width="4"/><circle cx="222" cy="150" r="4" fill="#222"/><circle cx="268" cy="158" r="4" fill="#222"/>
<path d="M214 186C222 172 238 176 242 182C250 176 266 180 268 196C256 190 248 192 242 190C236 194 224 192 214 186z" fill="#111"/><path d="M230 198C236 206 250 208 256 200C254 214 234 214 230 198z" fill="#111"/>
<path d="M150 240C190 214 230 235 250 236C290 214 330 235 349 280C359 320 340 346 320 351C318 380 305 400 290 409C240 416 190 400 165 386L130 340C110 300 120 260 150 240z" fill="#f47fb8"/>
<path d="M262 300C268 330 295 350 322 348" stroke="#222" stroke-width="2.5" fill="none"/>
<path d="M150 250C160 232 180 228 192 240C205 232 225 245 238 285L165 275z" fill="#fcc55e"/>
<path d="M163 266L236 290L185 410L154 396z" fill="#f26a4b"/>
<path d="M150 268L180 262L150 393L134 386z" fill="#fbfbfb"/>
<path d="M125 295C140 285 170 300 185 320C180 345 160 352 140 345C125 335 118 310 125 295z" fill="#fcc0a6"/>
<ellipse cx="297" cy="285" rx="32" ry="38" fill="#fcc0a6"/>
<path d="M273 262C280 245 300 240 315 250C325 262 322 280 310 285C295 280 280 278 273 262z" fill="#fcc55e"/>
</g>
<!-- fig3: girl with cotton candy -->
<g transform="translate(605,295) scale(.23857)">
<path d="M205 150C200 115 225 97 250 97C290 100 315 125 320 160C330 200 366 225 356 260C350 290 330 306 312 300C320 260 300 230 285 215L240 215C225 200 208 180 205 150z" fill="#fbd66e"/>
<path d="M125 62C140 80 150 95 145 105C165 95 186 115 178 140C201 160 201 195 180 215C150 236 100 225 82 195C70 170 80 150 92 140C85 115 100 85 125 62z" fill="#f98b8a"/>
<path d="M120 90C125 120 115 150 130 175C140 150 150 130 145 105z" fill="#fbaaa4"/>
<ellipse cx="250" cy="160" rx="42" ry="48" fill="#fcc0a6"/>
<path d="M240 90L247 100L254 92L252 104L238 104z" fill="#fbd66e"/>
<path d="M236 176C245 178 258 172 264 164C266 180 250 192 236 176z" fill="#111"/>
<path d="M236 146a6 8 0 1 0 1 0z" fill="#111" transform="scale(.5) translate(236 146)"/>
<rect x="232" y="205" width="36" height="32" fill="#fcc0a6"/>
<path d="M228 226C245 240 268 240 282 228L284 240C268 250 245 250 226 238z" fill="#fff"/>
<path d="M232 236L290 232L300 290L290 346C260 351 225 346 210 336L195 260z" fill="#f585be"/>
<path d="M205 336C235 351 275 351 295 340C315 370 329 400 329 423L255 441L240 410L225 406L165 406C170 380 185 350 205 336z" fill="#c0b4dc"/>
<path d="M172 405L240 408C246 480 250 560 250 606L235 616C215 560 160 480 172 405z" fill="#fbb99e"/>
<path d="M252 440L326 422C320 480 280 540 256 601C250 560 250 500 252 440z" fill="#fcc4ab"/>
<path d="M240 410L248 600" stroke="#f2705e" stroke-width="4"/>
<path d="M190 625C210 622 235 612 250 602L254 650L242 632C225 634 205 634 190 625z" fill="#f573b0"/>
<path d="M300 288C275 332 238 322 226 306L168 216L195 200L246 280L286 270z" fill="#fcc0a6"/>
<path d="M206 262C190 250 170 240 160 242C150 270 152 310 160 325C170 335 185 330 188 318L182 280z" fill="#fcc0a6"/>
<path d="M150 238L172 240L168 300L156 300z" fill="#fbd2c0"/>
<circle cx="300" cy="268" r="25" fill="#fff"/>
</g>
<!-- fig4: lion -->
<g transform="translate(715,310) scale(.2087)">
<path d="M160 390C130 450 100 540 95 592L130 640L440 622C462 560 430 490 380 470C340 450 320 440 300 420z" fill="#fdc57c"/>
<path d="M152 402C165 398 190 410 200 425C200 480 195 540 185 580L140 572C135 520 140 450 152 402z" fill="#fbcdb0"/>
<path d="M88 625C110 610 150 612 182 625C175 645 120 648 95 642z" fill="#fdc57c"/>
<path d="M440 592C492 572 472 500 466 450" fill="none" stroke="#fba55c" stroke-width="9"/>
<path d="M462 455L455 410L470 430L478 408L482 432L495 420L490 452z" fill="#111"/>
<path d="M66 260C60 150 150 75 250 75C350 75 440 150 432 260C430 310 420 350 409 380L385 362L372 402L335 388L300 432L262 432L232 420L215 398L180 402L165 378L135 374C90 340 70 300 66 260z" fill="#fcaa68"/>
<path d="M212 78L250 75C350 75 440 150 432 260C430 310 420 350 409 380L385 362L372 402L335 388L300 432L262 432L262 330L258 212z" fill="#f9935c"/>
<path d="M186 82L200 130L212 78zM322 85L300 150L350 100zM66 290L110 280L72 305z" fill="#fafafa"/>
<circle cx="150" cy="178" r="24" fill="#fdc47a"/><circle cx="373" cy="192" r="26" fill="#fdc47a"/>
<path d="M150 192L136 176A8 8 0 0 1 150 170A8 8 0 0 1 164 176zM373 208L359 192A8 8 0 0 1 373 185A8 8 0 0 1 387 192z" fill="#111"/>
<ellipse cx="255" cy="255" rx="106" ry="78" fill="#fdc47a"/>
<path d="M258 212L236 272L282 272z" fill="#fba866"/>
<circle cx="165" cy="272" r="16" fill="#f58ad0"/><circle cx="328" cy="296" r="17" fill="#f58ad0"/>
<ellipse cx="255" cy="300" rx="30" ry="21" fill="#fff"/>
<path d="M232 266L278 270L255 288z" fill="#111"/>
<path d="M183 238C185 262 205 268 212 250M292 255C295 278 315 280 322 264" stroke="#222" stroke-width="4" fill="none"/>
<g fill="#222"><circle cx="238" cy="298" r="2.5"/><circle cx="246" cy="308" r="2.5"/><circle cx="234" cy="310" r="2.5"/><circle cx="266" cy="300" r="2.5"/><circle cx="274" cy="310" r="2.5"/><circle cx="262" cy="312" r="2.5"/></g>
</g>
<!-- fig5: child with teddy -->
<g transform="translate(450,425) scale(.23857)">
<path d="M138 395L182 400C182 450 182 500 180 556L152 556C140 500 135 450 138 395z" fill="#5fcfb8"/>
<path d="M250 402L285 385C295 440 315 490 334 538L308 552C285 500 265 450 250 402z" fill="#5fcfb8"/>
<path d="M115 562L180 552L180 570L118 570z" fill="#f2686a"/><path d="M112 566L150 568L118 572z" fill="#f0f0f0"/>
<path d="M300 548L336 532L340 548L296 590L286 582z" fill="#f2686a"/><path d="M286 580L320 562L296 590z" fill="#f0f0f0"/>
<ellipse cx="215" cy="110" rx="46" ry="36" fill="#f9a0b4"/>
<circle cx="166" cy="112" r="9" fill="#f9a0b4"/><circle cx="272" cy="124" r="10" fill="#f9a0b4"/>
<path d="M172 100C175 78 200 68 222 72C245 75 262 90 264 108C240 92 205 88 172 100z" fill="#5fcfb8"/>
<path d="M212 48L222 76L208 76z" fill="#5fcfb8"/>
<path d="M205 125q12 12 26 2" stroke="#111" stroke-width="4" fill="none"/><circle cx="204" cy="108" r="3" fill="#111"/><path d="M228 108l10 4" stroke="#111" stroke-width="3"/>
<circle cx="160" cy="160" r="29" fill="#fba55c"/><circle cx="310" cy="182" r="23" fill="#fba55c"/>
<ellipse cx="166" cy="160" rx="12" ry="10" fill="#111"/>
<path d="M150 200C105 225 80 300 72 385C75 416 105 419 130 396L136 380C150 400 165 406 180 400C180 430 200 456 216 459C246 445 270 400 290 360C310 310 300 260 290 240z" fill="#fba55c"/>
<ellipse cx="232" cy="215" rx="86" ry="70" fill="#fba55c"/>
<ellipse cx="165" cy="350" rx="46" ry="66" fill="#fdd07a"/>
<path d="M195 360C230 330 280 300 296 250C311 300 290 370 230 391C210 396 195 380 195 360z" fill="#f58a4c"/>
<path d="M140 240C155 225 180 225 190 240C185 265 165 282 145 280C135 268 135 252 140 240z" fill="#f79ab0"/>
<path d="M208 305C225 295 250 300 262 315C255 332 235 338 215 330z" fill="#f79ab0"/>
<path d="M226 236q5 8 10 0q5 8 10 0M236 226v10" stroke="#222" stroke-width="3" fill="none"/><circle cx="212" cy="214" r="3.5" fill="#222"/><circle cx="258" cy="222" r="3.5" fill="#222"/><circle cx="204" cy="228" r="4" fill="#f585be"/><circle cx="262" cy="240" r="4" fill="#f585be"/>
</g>
<!-- fig6: dancing girl -->
<g transform="translate(560,425) scale(.23857)">
<path d="M130 425L180 430C186 450 185 470 170 490L150 521L135 511C150 480 125 460 130 425z" fill="#fbb79c"/>
<path d="M225 392C250 380 285 395 296 440C290 480 265 500 246 560L215 546C215 510 240 480 235 450z" fill="#fbb79c"/>
<path d="M132 520C145 500 165 480 182 470C190 490 170 520 150 535C140 538 132 532 132 520z" fill="#111"/>
<path d="M212 540C225 545 240 560 246 600C235 605 220 585 212 560z" fill="#111"/>
<path d="M180 100C175 65 200 45 225 50C250 55 262 75 290 80C325 85 345 110 335 135C325 160 295 165 275 150L230 175z" fill="#fbd468"/>
<ellipse cx="210" cy="135" rx="48" ry="52" fill="#fbb79c"/>
<path d="M190 60C215 45 245 60 250 90C230 95 200 90 190 60z" fill="#fbd468"/>
<path d="M292 112l-18-22 12-2 8 14 10-16 8 10-12 14 20 4-6 10-18-8-4 22-10-4 6-20-20 4z" fill="#f47fc0"/>
<path d="M195 142C205 148 218 144 224 136C226 152 208 162 195 142z" fill="#111"/>
<path d="M176 120l10 6-10 6M214 118l8 2" stroke="#111" stroke-width="3" fill="none"/>
<rect x="208" y="178" width="34" height="36" fill="#fbb79c"/>
<path d="M160 216L196 196C170 160 140 125 132 104C128 92 112 84 96 92C98 112 104 132 112 150C125 175 145 200 160 216z" fill="#fbb79c"/><path d="M102 100L84 66M108 94L102 56M116 94L120 62M124 104L136 80" stroke="#fbb79c" stroke-width="10" stroke-linecap="round" fill="none"/>
<path d="M176 200C160 205 150 215 155 226L180 246L195 296C150 320 110 345 90 366L105 386L95 416C150 441 200 420 230 396C260 380 290 400 300 446L336 436C336 390 315 350 290 320L275 300L300 246C310 225 290 205 270 200L240 216L200 216z" fill="#c0b4dc"/>
<path d="M196 204C210 215 228 215 240 204L244 218C228 230 208 230 194 218z" fill="#fff"/>
<path d="M296 246L316 235C336 265 346 285 336 296C310 316 260 336 225 331C210 320 215 300 235 296C260 300 290 290 306 280z" fill="#fbb79c"/>
</g>
<!-- fig7: tent & family -->
<g transform="translate(650,450) scale(.20873)">
<ellipse cx="700" cy="546" rx="291" ry="55" fill="#4fc4a8"/>
<path d="M372 74Q250 330 40 468L485 468L485 215Q420 170 372 74z" fill="#55c5ab"/>
<path d="M372 74Q300 320 190 468L286 468L374 192z" fill="#6fd9c2"/>
<path d="M376 194L280 468L472 468z" fill="#0c0c0c"/>
<path d="M40 442L190 360" stroke="#222" stroke-width="4"/><path d="M30 428L44 428L40 482z" fill="#23426e"/>
<path d="M130 520l6-30 8 22 10-26 6 36zM232 470l8-28 8 20 8-24 6 32zM305 528l6-36 8 24 12-18 6 26zM925 505l4-56 12 30 12-10 4 36z" fill="#4fc4a8"/>
<path d="M770 200C764 130 800 94 845 94C900 100 920 160 940 220C950 250 965 265 972 275C950 300 930 306 915 300L900 240L780 230z" fill="#fbc35c"/>
<path d="M838 78l6 22 8-18z" fill="#fbc35c"/>
<ellipse cx="840" cy="182" rx="58" ry="62" fill="#fcc3a6"/>
<path d="M782 170C800 130 840 110 850 105C870 130 895 150 902 190C915 150 890 95 845 94C800 94 775 130 782 170z" fill="#fbc35c"/>
<circle cx="812" cy="188" r="11" fill="#f9908a"/><circle cx="874" cy="184" r="11" fill="#f9908a"/>
<path d="M832 206q12 10 26 0" stroke="#222" stroke-width="3" fill="none"/>
<path d="M768 236C790 214 830 224 850 232C880 224 916 240 936 270C947 300 936 340 916 382C906 396 890 401 880 399C850 398 815 392 792 376C775 340 764 290 768 236z" fill="#f59ac8"/>
<path d="M828 478C860 462 900 448 918 420C933 460 918 500 875 516L818 519z" fill="#0c0c0c"/>
<path d="M758 345C765 318 800 316 812 345C818 370 820 395 822 406C850 392 890 392 916 415C919 430 905 445 885 451C860 461 840 469 828 479L812 516L775 500C765 450 752 395 758 345z" fill="#4a6fa0"/>
<path d="M916 376C906 400 870 421 830 436C810 441 790 452 775 446C770 435 790 425 810 420C840 405 870 390 886 368z" fill="#fcc3a6"/>
<path d="M695 556C720 540 770 545 800 540C815 535 835 535 852 545C850 558 820 556 800 556C770 570 720 572 695 556z" fill="#0c0c0c"/>
<path d="M462 160C455 120 480 80 530 70C570 62 610 70 625 60L630 38L641 65C646 100 640 130 632 160C610 140 590 125 560 130C530 135 500 150 462 160z" fill="#0c0c0c"/>
<ellipse cx="560" cy="186" rx="76" ry="66" fill="#fcc3a6"/>
<path d="M462 165C470 120 520 100 560 105C600 100 630 120 636 160C640 120 620 75 560 72C500 72 455 110 462 165z" fill="#0c0c0c"/>
<ellipse cx="505" cy="90" rx="24" ry="13" fill="#23426e" transform="rotate(-12 505 90)"/>
<circle cx="528" cy="185" r="23" fill="none" stroke="#fff" stroke-width="5"/><circle cx="598" cy="178" r="23" fill="none" stroke="#fff" stroke-width="5"/><path d="M551 182L575 180" stroke="#fff" stroke-width="4"/><circle cx="530" cy="186" r="4" fill="#222"/><circle cx="598" cy="180" r="4" fill="#222"/>
<path d="M565 215q14 10 30-2" stroke="#222" stroke-width="3" fill="none"/>
<path d="M440 246C480 235 520 240 560 250L630 265L641 330L620 440L560 452L540 330L440 300z" fill="#a5dcec"/>
<path d="M450 330C470 294 520 290 545 320C560 370 560 420 570 450L700 440C741 450 746 480 720 500C680 530 620 551 560 546L520 530C480 480 450 400 450 330z" fill="#0c0c0c"/>
<path d="M415 290C410 260 440 244 480 250C520 255 560 275 591 300L580 326C540 310 500 295 470 295C450 311 420 311 415 290z" fill="#fcc3a6"/>
<path d="M580 296L622 296L615 336L586 336z" fill="#fff"/>
<path d="M498 530L548 540L530 590L490 585z" fill="#f59ac0"/><path d="M470 600C480 580 500 575 540 578C545 600 520 620 480 620z" fill="#dfe3ea"/>
<path d="M548 548C580 560 620 575 645 585C640 600 600 604 550 596z" fill="#f59ac0"/><path d="M545 590L645 588L640 602L550 602z" fill="#dfe3ea"/>
<path d="M620 330C615 260 650 205 700 205C750 210 775 260 770 300L760 340L640 350z" fill="#fbd468"/>
<path d="M692 185l8 22 10-20z" fill="#fbd468"/>
<ellipse cx="702" cy="282" rx="56" ry="50" fill="#fcc3a6"/>
<path d="M645 270C660 235 700 225 740 240C755 250 760 265 760 280C740 255 700 245 645 270z" fill="#fbd468"/>
<circle cx="662" cy="282" r="12" fill="#f9908a"/><circle cx="744" cy="288" r="12" fill="#f9908a"/>
<path d="M682 290C695 300 712 298 722 286C724 306 696 316 682 290z" fill="#111"/>
<path d="M612 380C615 345 650 330 690 335L750 330C770 370 765 430 750 470L640 440L612 440z" fill="#f585be"/>
<path d="M660 470L750 470C770 490 775 520 760 540C720 552 680 548 650 540C690 520 680 495 660 470z" fill="#c0b4dc"/>
<path d="M690 345C720 335 760 345 772 380C765 400 740 405 720 395C700 385 690 365 690 345z" fill="#fcc3a6"/>
<path d="M670 322L712 326L706 366L676 362z" fill="#cfeff2"/>
</g>
<!-- fig8: boy -->
<g transform="translate(880,285) scale(.23855)">
<ellipse cx="150" cy="525" rx="66" ry="66" fill="#8a5045"/><ellipse cx="895" cy="490" rx="62" ry="66" fill="#8a5045"/>
<path d="M88 505C100 470 150 450 205 470L210 515C160 500 120 505 88 505z" fill="#733a33"/><path d="M838 440C880 415 935 430 955 480C920 470 870 470 835 490z" fill="#733a33"/>
<path d="M165 535C190 530 205 550 205 575M848 545C840 510 855 495 880 495" stroke="#1a0d10" stroke-width="4" fill="none"/>
<path d="M90 518C125 506 165 504 205 514M838 478C880 470 925 474 954 488" stroke="#e9d9d6" stroke-width="2.2" fill="none"/>
<path d="M205 400L838 400L838 520C836 570 822 600 805 628C770 692 640 744 515 744C400 744 260 692 225 628C210 595 205 540 205 400z" fill="#8a5045"/>
<path d="M160 460C150 350 170 250 250 180C300 145 380 130 440 135L480 140L520 130C600 120 700 120 770 160C840 210 860 330 862 436L835 426C700 400 600 400 550 405C400 400 280 410 208 436z" fill="#3f1926"/>
<path d="M262 420C255 330 270 230 300 160L340 140C325 230 325 330 350 410z" fill="#562735"/>
<path d="M600 125L700 130C760 200 800 300 815 420L740 410C720 300 670 200 600 125z" fill="#562735"/>
<path d="M484 142C455 135 428 115 430 96C438 82 462 86 472 104C480 118 484 130 484 142zM485 138C495 110 515 70 535 65C545 85 525 120 510 138z" fill="#3f1926"/>
<path d="M550 320L580 406L550 406zM660 295L706 410L665 406z" fill="#8a5045"/>
<ellipse cx="372" cy="482" rx="15" ry="20" fill="#0a0a0a"/><ellipse cx="641" cy="463" rx="15" ry="18" fill="#0a0a0a"/>
<path d="M505 452C495 480 500 495 520 490C535 490 545 500 535 515" stroke="#0a0a0a" stroke-width="5" fill="none"/>
<circle cx="360" cy="607" r="68" fill="#733a33"/><circle cx="688" cy="592" r="78" fill="#733a33"/>
<circle cx="515" cy="586" r="40" fill="#0a0a0a"/>
</g>
<g transform="translate(880,430) scale(.23855)">
<path d="M250 240C210 270 180 320 165 362L250 420zM785 240C820 265 850 310 866 352L785 420zM300 480L360 506L310 506zM640 506L720 480L726 511z" fill="#fdb655"/>
<path d="M430 128L515 236L610 128C580 136 460 136 430 128z" fill="#733a33"/>
<path d="M310 148L360 160L365 140L410 155L415 132L435 130L510 232L590 130L612 135L615 158L660 140L665 160L712 148L715 176L540 264L490 264L305 176z" fill="#e9e6f3"/>
<path d="M245 190C245 170 265 164 285 172L490 262L490 556L260 450C250 445 245 435 245 420z" fill="#98d9ec"/>
<path d="M785 190C785 170 765 160 745 168L540 262L540 556L770 450C780 445 785 435 785 420z" fill="#98d9ec"/>
<rect x="490" y="255" width="51" height="306" rx="18" fill="#62c8e8"/>
<g id="armL"><path d="M165 365C120 420 80 480 60 520C55 570 100 621 160 621C200 616 230 590 260 560C300 520 340 470 368 415C360 400 345 405 330 410C350 395 355 380 340 378C325 378 310 390 300 400C320 375 330 355 318 346C300 342 275 370 262 395C250 380 248 352 232 347C212 350 215 385 225 420z" fill="#8a5045"/>
<path d="M165 365L225 420L228 442L70 512C90 460 130 410 165 365z" fill="#733a33"/></g>
<g transform="translate(1030,0) scale(-1,1)"><path d="M165 365C120 420 80 480 60 520C55 570 100 621 160 621C200 616 230 590 260 560C300 520 340 470 368 415C360 400 345 405 330 410C350 395 355 380 340 378C325 378 310 390 300 400C320 375 330 355 318 346C300 342 275 370 262 395C250 380 248 352 232 347C212 350 215 385 225 420z" fill="#8a5045"/>
<path d="M165 365L225 420L228 442L70 512C90 460 130 410 165 365z" fill="#733a33"/></g>
</g>
</g>
<!-- selection box -->
<g fill="none" stroke="#989898" stroke-width="1.15">
<rect x="883.5" y="291.5" width="239" height="295"/>
<path d="M1002.7 268.5V287"/>
</g>
<g fill="#fff" stroke="#808080" stroke-width="1.5">
<circle cx="883.6" cy="291.6" r="4.6"/><circle cx="1002.8" cy="291.6" r="4.6"/><circle cx="1122.6" cy="291.6" r="4.6"/>
<circle cx="883.6" cy="439.2" r="4.6"/><circle cx="1122.6" cy="439.2" r="4.6"/>
<circle cx="883.6" cy="586.4" r="4.6"/><circle cx="1002.8" cy="586.4" r="4.6"/><circle cx="1122.6" cy="586.4" r="4.6"/>
</g>
<path d="M1010.0 257.3A7.3 7.3 0 1 0 1006.7 264.5" fill="none" stroke="#858585" stroke-width="4.8"/>
<path d="M1003.8 256.6H1018.2L1011 263.6z" fill="#fff" stroke="#858585" stroke-width="1.2" stroke-linejoin="round"/>
<path d="M1010.0 257.6A7.3 7.3 0 1 0 1006.7 264.5" fill="none" stroke="#fff" stroke-width="2.4"/>

</svg>
<span class="t" style="left:11.71px;top:10.30px;font-size:13.0px;font-weight:400;color:#444444;transform:scaleX(0.8926);">File</span>
<span class="t" style="left:63.50px;top:10.30px;font-size:13.0px;font-weight:700;color:#444444;transform:scaleX(1.0254);">Home</span>
<span class="t" style="left:127.52px;top:10.30px;font-size:13.0px;font-weight:400;color:#444444;transform:scaleX(0.9812);">Insert</span>
<span class="t" style="left:188.50px;top:10.30px;font-size:13.0px;font-weight:400;color:#444444;transform:scaleX(1.0042);">Design</span>
<span class="t" style="left:258.60px;top:10.30px;font-size:13.0px;font-weight:400;color:#444444;transform:scaleX(0.9592);">Transitions</span>
<span class="t" style="left:351.10px;top:10.30px;font-size:13.0px;font-weight:400;color:#444444;transform:scaleX(0.9798);">Animations</span>
<span class="t" style="left:445.90px;top:10.30px;font-size:13.0px;font-weight:400;color:#444444;transform:scaleX(0.9596);">Slide Show</span>
<span class="t" style="left:537.67px;top:10.30px;font-size:13.0px;font-weight:400;color:#444444;transform:scaleX(0.9305);">Review</span>
<span class="t" style="left:606.20px;top:10.30px;font-size:13.0px;font-weight:400;color:#444444;transform:scaleX(0.9351);">View</span>
<span class="t" style="left:660.05px;top:10.30px;font-size:13.0px;font-weight:400;color:#444444;transform:scaleX(1.0468);">Help</span>
<span class="t" style="left:729.09px;top:10.30px;font-size:13.0px;font-weight:400;color:#b7472a;transform:scaleX(1.0084);">Format</span>
<span class="t" style="left:841.00px;top:10.30px;font-size:13.0px;font-weight:400;color:#444444;transform:scaleX(0.9375);">Search</span>
<span class="t" style="left:1197.10px;top:10.20px;font-size:13.0px;font-weight:700;color:#b7472a;transform:scaleX(0.9387);">Share</span>
<span class="t" style="left:1273.20px;top:10.20px;font-size:13.0px;font-weight:700;color:#b7472a;transform:scaleX(0.9769);">Comments</span>
<span class="t" style="left:9.63px;top:72.90px;font-size:13.0px;font-weight:400;color:#444444;transform:scaleX(0.8684);">Paste</span>
<span class="t" style="left:7.60px;top:111.90px;font-size:13.0px;font-weight:400;color:#444444;transform:scaleX(0.9041);">Clipboard</span>
<span class="t" style="left:104.59px;top:72.90px;font-size:13.0px;font-weight:400;color:#444444;transform:scaleX(0.9134);">New</span>
<span class="t" style="left:100.50px;top:88.50px;font-size:13.0px;font-weight:400;color:#444444;transform:scaleX(0.8543);">Slide</span>
<span class="t" style="left:143.07px;top:72.90px;font-size:13.0px;font-weight:400;color:#444444;transform:scaleX(0.8254);">Reuse</span>
<span class="t" style="left:144.40px;top:88.50px;font-size:13.0px;font-weight:400;color:#444444;transform:scaleX(0.8216);">Slides</span>
<span class="t" style="left:201.67px;top:39.70px;font-size:13.0px;font-weight:400;color:#444444;transform:scaleX(0.9266);">Layout</span>
<span class="t" style="left:201.78px;top:63.70px;font-size:13.0px;font-weight:400;color:#444444;transform:scaleX(0.8216);">Reset</span>
<span class="t" style="left:202.60px;top:87.90px;font-size:13.0px;font-weight:400;color:#444444;transform:scaleX(0.8718);">Section</span>
<span class="t" style="left:160.70px;top:111.90px;font-size:13.0px;font-weight:400;color:#444444;transform:scaleX(0.7965);">Slides</span>
<span class="t" style="left:275.30px;top:48.00px;font-size:13.0px;font-weight:400;color:#444444;transform:scaleX(0.9074);">Arial</span>
<span class="t" style="left:408.20px;top:48.00px;font-size:13.0px;font-weight:400;color:#444444;transform:scaleX(0.7519);">14</span>
<span class="t" style="left:377.78px;top:111.90px;font-size:13.0px;font-weight:400;color:#444444;transform:scaleX(0.9212);">Font</span>
<span class="t" style="left:597.83px;top:111.90px;font-size:13.0px;font-weight:400;color:#444444;transform:scaleX(0.8726);">Paragraph</span>
<span class="t" style="left:884.30px;top:72.90px;font-size:13.0px;font-weight:400;color:#444444;transform:scaleX(0.9061);">Arrange</span>
<span class="t" style="left:935.30px;top:72.90px;font-size:13.0px;font-weight:400;color:#444444;transform:scaleX(0.9161);">Quick</span>
<span class="t" style="left:931.40px;top:88.50px;font-size:13.0px;font-weight:400;color:#444444;transform:scaleX(0.8134);">Styles</span>
<span class="t" style="left:994.30px;top:38.80px;font-size:13.0px;font-weight:400;color:#444444;transform:scaleX(0.8443);">Shape Fill</span>
<span class="t" style="left:994.30px;top:61.90px;font-size:13.0px;font-weight:400;color:#444444;transform:scaleX(0.8946);">Shape Outline</span>
<span class="t" style="left:994.30px;top:84.90px;font-size:13.0px;font-weight:400;color:#444444;transform:scaleX(0.8546);">Shape Effects</span>
<span class="t" style="left:879.57px;top:111.90px;font-size:13.0px;font-weight:400;color:#444444;transform:scaleX(0.9321);">Drawing</span>
<span class="t" style="left:1118.80px;top:38.80px;font-size:13.0px;font-weight:400;color:#444444;transform:scaleX(0.8978);">Find</span>
<span class="t" style="left:1118.83px;top:61.90px;font-size:13.0px;font-weight:400;color:#444444;transform:scaleX(0.8716);">Replace</span>
<span class="t" style="left:1119.70px;top:84.90px;font-size:13.0px;font-weight:400;color:#444444;transform:scaleX(0.8188);">Select</span>
<span class="t" style="left:1118.77px;top:111.90px;font-size:13.0px;font-weight:400;color:#444444;transform:scaleX(0.9294);">Editing</span>
<span class="t" style="left:1197.56px;top:72.90px;font-size:13.0px;font-weight:400;color:#444444;transform:scaleX(0.9355);">Dictate</span>
<span class="t" style="left:1203.40px;top:111.90px;font-size:13.0px;font-weight:400;color:#444444;transform:scaleX(0.8299);">Voice</span>
<span class="t" style="left:279.40px;top:79.26px;font-size:13.4px;font-weight:700;color:#444444;transform:scaleX(0.8000);">B</span>
<span class="t" style="left:302.94px;top:79.09px;font-size:13.6px;font-weight:400;color:#444444;transform:scaleX(0.9429);font-family:'Liberation Serif',serif;font-style:italic;">I</span>
<span class="t" style="left:320.90px;top:79.60px;font-size:13px;font-weight:400;color:#444444;transform:scaleX(1.1000);">U</span>
<span class="t" style="left:344.40px;top:78.75px;font-size:14px;font-weight:400;color:#444444;transform:scaleX(0.9333);text-shadow:1px 1.2px 1px #8a8a8a;">S</span>
<span class="t" style="left:364.40px;top:81.38px;font-size:11.6px;font-weight:400;color:#555;transform:scaleX(1.0604);">ab</span>
<span class="t" style="left:386.00px;top:77.30px;font-size:9.8px;font-weight:400;color:#444444;transform:scaleX(1.0619);">AV</span>
<span class="t" style="left:418.20px;top:80.06px;font-size:13.4px;font-weight:400;color:#444444;transform:scaleX(0.9627);">Aa</span>
<span class="t" style="left:456.50px;top:47.53px;font-size:13.2px;font-weight:400;color:#444444;transform:scaleX(1.0000);">A</span>
<span class="t" style="left:478.40px;top:48.54px;font-size:12px;font-weight:400;color:#444444;transform:scaleX(1.0000);">A</span>
<span class="t" style="left:506.00px;top:45.01px;font-size:17px;font-weight:400;color:#444444;transform:scaleX(0.9167);">A</span>
<span class="t" style="left:496.20px;top:76.81px;font-size:14.4px;font-weight:400;color:#444444;transform:scaleX(1.1800);">A</span>
<span class="t" style="left:704.00px;top:36.73px;font-size:10px;font-weight:400;color:#2b88d8;transform:scaleX(0.9143);">A</span>
<span class="t" style="left:750.20px;top:44.00px;font-size:8.5px;font-weight:700;color:#2b88d8;transform:scaleX(0.9333);">A</span>
<span class="t" style="left:1107.40px;top:57.71px;font-size:10.5px;font-weight:400;color:#a43fb8;transform:scaleX(0.7667);">b</span>
<span class="t" style="left:1110.00px;top:66.31px;font-size:10.5px;font-weight:400;color:#2b88d8;transform:scaleX(0.8800);">c</span>
<span class="t" style="left:578.60px;top:44.86px;font-size:5.6px;font-weight:700;color:#2b88d8;transform:scaleX(0.6667);">1</span>
<span class="t" style="left:578.00px;top:51.06px;font-size:5.6px;font-weight:700;color:#2b88d8;transform:scaleX(1.0000);">2</span>
<span class="t" style="left:578.00px;top:57.06px;font-size:5.6px;font-weight:700;color:#2b88d8;transform:scaleX(1.0000);">3</span>
<span class="t" style="left:553.20px;top:201.90px;font-size:43.0px;font-weight:400;color:#0b0b0b;transform:scaleX(0.7340);-webkit-text-stroke:1.5px #0b0b0b;letter-spacing:2.5px;">ALTERNATIVE RESOURCES</span>
<span class="t" style="left:222.80px;top:648.00px;font-size:15px;font-weight:400;color:#5e5e5e;transform:scaleX(0.9787);">Click to add notes</span>
<span class="t" style="left:-1.00px;top:152.63px;font-size:15.2px;font-weight:400;color:#505050;transform:scaleX(0.9364);">42</span>
<span class="t" style="left:-1.00px;top:252.53px;font-size:15.2px;font-weight:400;color:#c8502f;transform:scaleX(0.9364);">43</span>
<span class="t" style="left:-1.00px;top:352.63px;font-size:15.2px;font-weight:400;color:#505050;transform:scaleX(0.9607);">44</span>
<span class="t" style="left:-1.00px;top:452.73px;font-size:15.2px;font-weight:400;color:#505050;transform:scaleX(0.9364);">45</span>
<span class="t" style="left:-1.00px;top:552.63px;font-size:15.2px;font-weight:400;color:#505050;transform:scaleX(0.9607);">46</span>
<span class="t" style="left:-1.00px;top:652.83px;font-size:15.2px;font-weight:400;color:#505050;transform:scaleX(0.9364);">47</span>
<!--TITLE-->
</body></html>
